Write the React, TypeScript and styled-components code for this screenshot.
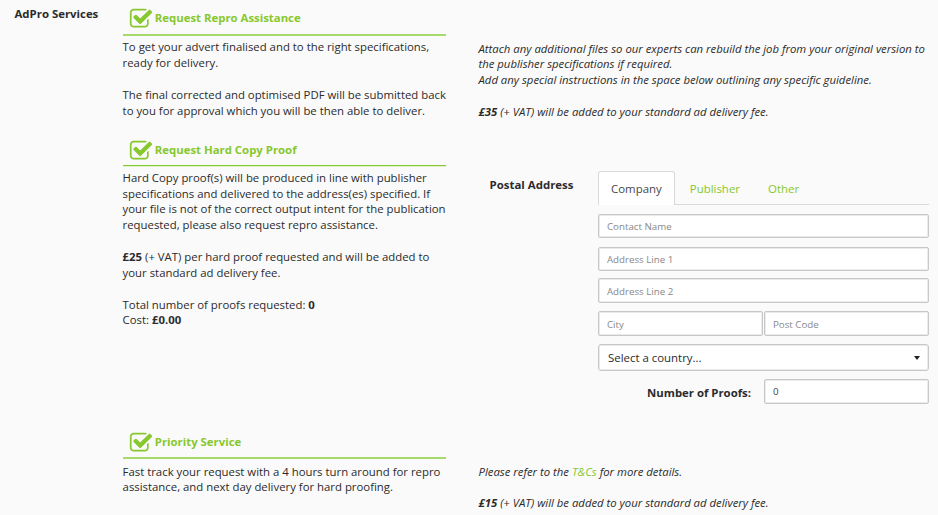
import React from "react";
import styled, { createGlobalStyle } from "styled-components";

const green = "#86c82d";

const GlobalStyle = createGlobalStyle`
  *, *::before, *::after { box-sizing: border-box; }
  body {
    margin: 0;
    background: #fafafa;
    color: #2b2b2b;
    font-family: "Open Sans", "Noto Sans", sans-serif;
    font-size: 11.36px;
    line-height: 15.85px;
  }
`;

const Page = styled.main`
  display: grid;
  grid-template-columns: 122.6px 323.4px 1fr;
  grid-template-rows: 131px 293px 91px;
  height: 515px;
  overflow: hidden;
`;

const GroupLabel = styled.h2`
  margin: 0;
  padding: 6px 0 0 14.5px;
  font-size: 11.4px;
  line-height: 16px;
  font-weight: 700;
`;

const Service = styled.section`
  grid-column: 2;
  display: flex;
  flex-direction: column;
`;

const ServiceHeader = styled.label<{ $height: number; $thin: boolean }>`
  display: flex;
  align-items: flex-start;
  height: ${(p) => p.$height}px;
  padding: ${(p) => (p.$thin ? 0.5 : 0)}px 0 0 6.8px;
  border-bottom: ${(p) => (p.$thin ? "1px solid #86c832" : "2px solid #a6db6c")};
  box-shadow: ${(p) => (p.$thin ? "0 1px 0 #dff0c9" : "none")};
  color: ${green};
`;

const CheckIcon = styled.svg`
  flex: none;
  width: 24px;
  height: 24px;
  margin-top: 7px;
  fill: currentColor;
`;

const ServiceTitle = styled.span`
  margin: 10px 0 0 1.4px;
  font-size: 11.39px;
  line-height: 16px;
  font-weight: 700;
  white-space: nowrap;
`;

const Copy = styled.p<{ $top?: number }>`
  margin: ${(p) => p.$top ?? 4}px 0 0;
  white-space: nowrap;

  & + & { margin-top: 15.85px; }
`;

const Notes = styled.div<{ $top: number }>`
  grid-column: 3;
  padding: ${(p) => p.$top}px 0 0 32.5px;
  font-style: italic;
  font-size: 11.34px;
`;

const TermsLink = styled.a`
  color: ${green};
`;

const AddressForm = styled.form`
  grid-column: 3;
  display: grid;
  grid-template-columns: 108.4px 331px;
  padding: 40px 0 0 43.6px;
  align-content: start;
`;

const FormLabel = styled.h3`
  margin: 6px 0 0;
  font-size: 11.43px;
  line-height: 16px;
  font-weight: 700;
`;

const Tabs = styled.div`
  display: flex;
  height: 34px;
  border-bottom: 1px solid #d9d9d9;
`;

const Tab = styled.button<{ $active?: boolean }>`
  height: 34px;
  padding: 1px 12px 0;
  margin: 0 2px 0 0;
  border: 1px solid ${(p) => (p.$active ? "#d9d9d9" : "transparent")};
  border-bottom: 0;
  border-radius: 3px 3px 0 0;
  background: ${(p) => (p.$active ? "#fff" : "transparent")};
  color: ${(p) => (p.$active ? "#484848" : green)};
  font: inherit;
  font-size: 11.45px;
`;

const Fields = styled.div`
  display: flex;
  flex-direction: column;
  padding-top: 9px;
`;

const FieldRow = styled.div<{ $height?: number; $gap: number }>`
  display: flex;
  gap: 1px;
  height: ${(p) => p.$height ?? 25}px;
  margin-bottom: ${(p) => p.$gap}px;
`;

const Input = styled.input<{ $inset?: number }>`
  flex: 1;
  min-width: 0;
  padding: ${(p) => p.$inset ?? 1}px 8px 0;
  border: 1px solid #c8c8c8;
  border-radius: 2px;
  box-shadow: inset 0 0 0 1px #ebebeb;
  background: #fff;
  color: #444;
  font: inherit;
  font-size: 9.74px;
  outline: none;

  &::placeholder { color: #888; opacity: 1; }
`;

const Select = styled.button`
  display: flex;
  flex: 1;
  align-items: center;
  justify-content: space-between;
  padding: 1px 8px 0 9px;
  border: 1px solid #c8c8c8;
  border-radius: 3px;
  box-shadow: inset 0 0 0 1px #ebebeb;
  background: #fff;
  color: #2b2b2b;
  font: inherit;
  font-size: 11.43px;
`;

const Caret = styled.span`
  border: 3.5px solid transparent;
  border-top: 4px solid #222;
  border-bottom: 0;
`;

const ProofLabel = styled.label`
  flex: 0 0 165px;
  padding: 6px 12px 0 0;
  text-align: right;
  font-weight: 700;
`;

function Header({ title, height, thin = false }: { title: string; height: number; thin?: boolean }) {
  return (
    <ServiceHeader $height={height} $thin={thin}>
      <CheckIcon viewBox="0 0 1792 1792">
        <path d="M1472 930v318q0 119-84.5 203.5t-203.5 84.5h-832q-119 0-203.5-84.5t-84.5-203.5v-832q0-119 84.5-203.5t203.5-84.5h832q63 0 117 25 15 7 18 23 3 17-9 29l-49 49q-10 10-23 10-3 0-9-2-23-6-45-6h-832q-66 0-113 47t-47 113v832q0 66 47 113t113 47h832q66 0 113-47t47-113v-254q0-13 9-22l64-64q10-10 23-10 6 0 12 3 20 8 20 29zm231-489l-814 814q-24 24-57 24t-57-24l-430-430q-24-24-24-57t24-57l110-110q24-24 57-24t57 24l263 263 647-647q24-24 57-24t57 24l110 110q24 24 24 57t-24 57z" />
      </CheckIcon>
      <ServiceTitle>{title}</ServiceTitle>
    </ServiceHeader>
  );
}

export default function App() {
  return (
    <>
      <GlobalStyle />
      <Page>
        <GroupLabel>AdPro Services</GroupLabel>
        <Service>
          <Header title="Request Repro Assistance" height={36} />
          <Copy $top={3.2}>
            To get your advert finalised and to the right specifications,<br />
            ready for delivery.
          </Copy>
          <Copy>
            The final corrected and optimised PDF will be submitted back<br />
            to you for approval which you will be then able to deliver.
          </Copy>
        </Service>
        <Notes $top={40.5}>
          <Copy $top={0}>
            Attach any additional files so our experts can rebuild the job from your original version to<br />
            the publisher specifications if required.<br />
            Add any special instructions in the space below outlining any specific guideline.
          </Copy>
          <Copy><b>£35</b> (+ VAT) will be added to your standard ad delivery fee.</Copy>
        </Notes>

        <Service>
          <Header title="Request Hard Copy Proof" height={35} thin />
          <Copy $top={3.8}>
            Hard Copy proof(s) will be produced in line with publisher<br />
            specifications and delivered to the address(es) specified. If<br />
            your file is not of the correct output intent for the publication<br />
            requested, please also request repro assistance.
          </Copy>
          <Copy>
            <b>£25</b> (+ VAT) per hard proof requested and will be added to<br />
            your standard ad delivery fee.
          </Copy>
          <Copy>
            Total number of proofs requested: <b>0</b><br />
            Cost: <b>£0.00</b>
          </Copy>
        </Service>
        <AddressForm>
          <FormLabel>Postal Address</FormLabel>
          <div>
            <Tabs>
              <Tab type="button" $active>Company</Tab>
              <Tab type="button">Publisher</Tab>
              <Tab type="button">Other</Tab>
            </Tabs>
            <Fields>
              <FieldRow $height={24} $gap={9}><Input placeholder="Contact Name" $inset={2} /></FieldRow>
              <FieldRow $height={24} $gap={7}><Input placeholder="Address Line 1" /></FieldRow>
              <FieldRow $gap={8}><Input placeholder="Address Line 2" $inset={2} /></FieldRow>
              <FieldRow $gap={8}>
                <Input placeholder="City" $inset={2} />
                <Input placeholder="Post Code" $inset={2} />
              </FieldRow>
              <FieldRow $height={27} $gap={8}>
                <Select type="button">Select a country...<Caret /></Select>
              </FieldRow>
              <FieldRow $gap={0}>
                <ProofLabel htmlFor="proofs">Number of Proofs:</ProofLabel>
                <Input id="proofs" defaultValue="0" />
              </FieldRow>
            </Fields>
          </div>
        </AddressForm>

        <Service>
          <Header title="Priority Service" height={35} />
          <Copy $top={4.6}>
            Fast track your request with a 4 hours turn around for repro<br />
            assistance, and next day delivery for hard proofing.
          </Copy>
        </Service>
        <Notes $top={39.5}>
          <Copy $top={0}>Please refer to the <TermsLink>T&amp;Cs</TermsLink> for more details.</Copy>
          <Copy><b>£15</b> (+ VAT) will be added to your standard ad delivery fee.</Copy>
        </Notes>
      </Page>
    </>
  );
}
